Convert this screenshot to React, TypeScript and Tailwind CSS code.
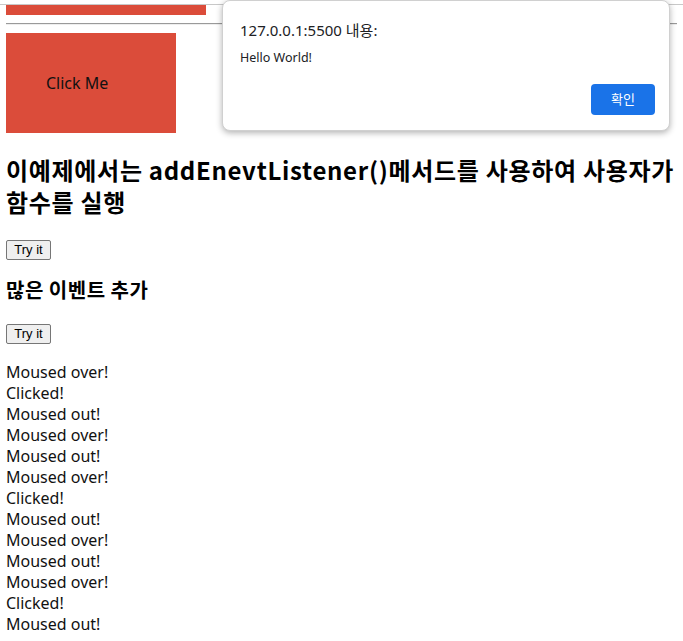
import React from "react";

const lines = [
  "Moused over!",
  "Clicked!",
  "Moused out!",
  "Moused over!",
  "Moused out!",
  "Moused over!",
  "Clicked!",
  "Moused out!",
  "Moused over!",
  "Moused out!",
  "Moused over!",
  "Clicked!",
  "Moused out!",
];

const kr = { fontFamily: '"Noto Sans", "Noto Sans CJK KR", sans-serif' };
const krBold = { fontFamily: '"Noto Sans CJK KR", sans-serif' };
const btnFont = { fontFamily: '"Liberation Sans", Arial, sans-serif' };

function TryIt({ className }: { className: string }) {
  return (
    <button
      className={`${className} self-start h-[20px] w-[45px] border border-[#767676] rounded-[2px] bg-[#efefef] text-[13px] leading-[18px] text-black`}
      style={btnFont}
    >
      Try it
    </button>
  );
}

export default function App() {
  return (
    <div className="relative w-[683px] h-[641px] overflow-hidden bg-white text-black" style={kr}>
      <div className="flex flex-col pt-[4px]">
        <div className="h-px bg-[#c8c8c8]" />
        <div className="flex flex-col px-[6px]">
          <div className="w-[200px] h-[10px] bg-[#db4c3a]" />
          <div className="mt-[8px] h-[2px] border-t border-t-[#9a9a9a] border-b border-b-[#eeeeee]" />
          <div className="mt-[8px] w-[170px] h-[100px] bg-[#db4c3a] flex items-center pl-[40px] text-[16px] text-[#111]">
            Click Me
          </div>
          <h2
            className="mt-[21px] text-[24px] leading-[32px] font-bold whitespace-nowrap tracking-[0.7px]"
            style={krBold}
          >
            이예제에서는 addEnevtListener()메서드를 사용하여 사용자가
            <br />
            함수를 실행
          </h2>
          <TryIt className="mt-[22px]" />
          <h3 className="mt-[17px] text-[20px] leading-[25px] font-bold tracking-[0.5px]" style={krBold}>
            많은 이벤트 추가
          </h3>
          <TryIt className="mt-[22px]" />
          <div className="mt-[18px] flex flex-col text-[16px] leading-[21px] text-[#111]">
            {lines.map((l, i) => (
              <div key={i}>{l}</div>
            ))}
          </div>
        </div>
      </div>

      <div className="absolute left-[222px] top-0 w-[448px] h-[131px] bg-white rounded-[8px] border border-[#d0d0d0] shadow-[0_2px_6px_rgba(0,0,0,0.3)] flex flex-col pl-[17px] pr-[14px] pt-[18px]">
        <div className="text-[15px] leading-[22px] text-[#202124]">127.0.0.1:5500 내용:</div>
        <div className="mt-[9px] text-[12.5px] leading-[16px] text-[#202124]">Hello World!</div>
        <div className="mt-[18px] flex justify-end">
          <div className="w-[64px] h-[31px] rounded-[4px] bg-[#1a73e8] text-white text-[13px] flex items-center justify-center">
            확인
          </div>
        </div>
      </div>
    </div>
  );
}
